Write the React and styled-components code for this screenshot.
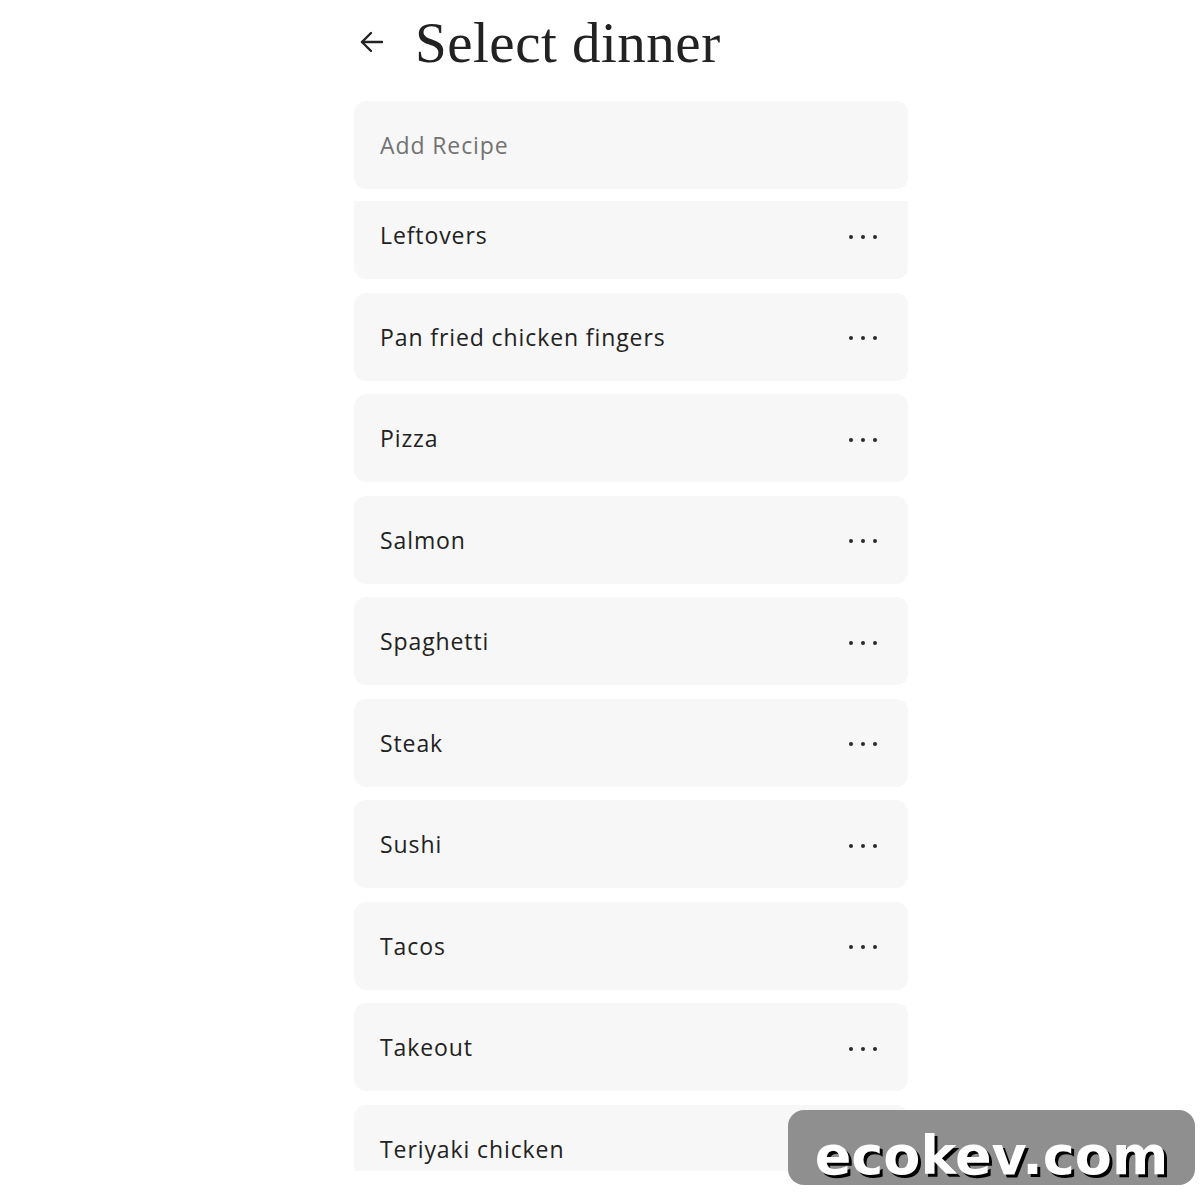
import styled, { createGlobalStyle } from "styled-components";

const recipes = [
  "Leftovers",
  "Pan fried chicken fingers",
  "Pizza",
  "Salmon",
  "Spaghetti",
  "Steak",
  "Sushi",
  "Tacos",
  "Takeout",
  "Teriyaki chicken",
];

export default function App() {
  return (
    <>
      <GlobalStyle />
      <Page>
        <Header>
          <BackButton aria-label="Back">
            <svg width="28" height="28" viewBox="0 0 28 28" fill="none" stroke="#222" strokeWidth="2.4" strokeLinecap="round" strokeLinejoin="round">
              <path d="M24 14H4" />
              <path d="M13 5L4 14l9 9" />
            </svg>
          </BackButton>
          <Title>Select dinner</Title>
        </Header>
        <AddCard>Add Recipe</AddCard>
        <Viewport>
          <List>
            {recipes.map((name) => (
              <Card key={name}>
                <span>{name}</span>
                <Dots>
                  <i />
                  <i />
                  <i />
                </Dots>
              </Card>
            ))}
          </List>
        </Viewport>
      </Page>
      <Watermark>ecokev.com</Watermark>
    </>
  );
}

const GlobalStyle = createGlobalStyle`
  body {
    margin: 0;
    background: #fff;
    font-family: "Open Sans", "Liberation Sans", sans-serif;
    color: #222;
  }
`;

const Page = styled.div`
  width: 554px;
  margin-left: 354px;
  display: flex;
  flex-direction: column;
`;

const Header = styled.header`
  height: 84px;
  display: flex;
  align-items: center;
  gap: 28px;
`;

const BackButton = styled.button`
  border: 0;
  background: none;
  padding: 0;
  margin-left: 3px;
  width: 30px;
  height: 30px;
  display: flex;
  align-items: center;
  justify-content: center;
  cursor: pointer;
`;

const Title = styled.h1`
  margin: 0;
  font-family: "Liberation Serif", serif;
  font-weight: 400;
  font-size: 57px;
  letter-spacing: 0.5px;
  color: #222;
  line-height: 1;
`;

const cardBase = `
  box-sizing: border-box;
  height: 88px;
  border-radius: 12px;
  background: #f7f7f7;
  padding: 0 26px;
  display: flex;
  align-items: center;
  font-size: 23px;
  letter-spacing: 0.9px;
`;

const AddCard = styled.div`
  ${cardBase}
  margin-top: 17px;
  color: #727272;
`;

const Viewport = styled.div`
  margin-top: 12px;
  height: 970px;
  overflow: hidden;
`;

const List = styled.div`
  margin-top: -10px;
  display: flex;
  flex-direction: column;
  gap: 13.5px;
`;

const Card = styled.div`
  ${cardBase}
  flex-shrink: 0;
  justify-content: space-between;
  color: #222;
`;

const Dots = styled.div`
  display: flex;
  gap: 8px;
  margin-right: 5px;
  margin-top: 3px;
  i {
    width: 4px;
    height: 4px;
    border-radius: 50%;
    background: #2a2a2a;
  }
`;

const Watermark = styled.div`
  position: absolute;
  left: 788px;
  top: 1110px;
  width: 407px;
  height: 75px;
  box-sizing: border-box;
  border-radius: 16px;
  background: #8f8f8f;
  display: flex;
  align-items: flex-end;
  justify-content: center;
  padding-bottom: 2px;
  font-family: "DejaVu Sans", sans-serif;
  font-weight: 700;
  font-size: 54px;
  line-height: 1;
  color: #fff;
  text-shadow: 3px 3px 0 #000;
`;
